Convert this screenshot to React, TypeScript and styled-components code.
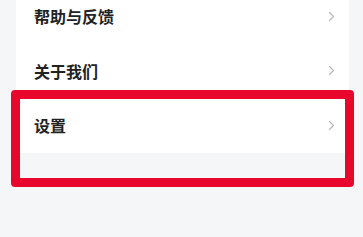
import styled, { createGlobalStyle } from "styled-components";

const GlobalStyle = createGlobalStyle`
  html, body {
    margin: 0;
    padding: 0;
    background: #f5f6f8;
    font-family: "Noto Sans CJK SC", "Noto Sans", sans-serif;
  }
`;

const Page = styled.div`
  position: relative;
  width: 363px;
  height: 237px;
  overflow: hidden;
  background: #f5f6f8;
`;

const Card = styled.div`
  margin: -11px 14px 0 16px;
  background: #ffffff;
  display: flex;
  flex-direction: column;
`;

const Row = styled.div`
  height: 54.5px;
  display: flex;
  align-items: center;
  justify-content: space-between;
  padding: 0 14px 0 18px;
`;

const Label = styled.span`
  font-size: 16px;
  font-weight: 600;
  color: #222222;
`;

const Chevron = styled.svg`
  width: 7px;
  height: 11px;
  color: #b8b8bc;
`;

// annotation frame drawn over the list
const Highlight = styled.div`
  position: absolute;
  left: 11px;
  top: 90px;
  width: 343px;
  height: 97px;
  box-sizing: border-box;
  border: 9px solid #e8062c;
  border-radius: 4px;
  pointer-events: none;
`;

const items = ["帮助与反馈", "关于我们", "设置"];

export default function App() {
  return (
    <>
      <GlobalStyle />
      <Page>
        <Card>
          {items.map((t) => (
            <Row key={t}>
              <Label>{t}</Label>
              <Chevron viewBox="0 0 7 11" fill="none">
                <path d="M1.5 1.5L5.5 5.5L1.5 9.5" stroke="currentColor" strokeWidth="1.2" strokeLinecap="round" strokeLinejoin="round" />
              </Chevron>
            </Row>
          ))}
        </Card>
        <Highlight />
      </Page>
    </>
  );
}
